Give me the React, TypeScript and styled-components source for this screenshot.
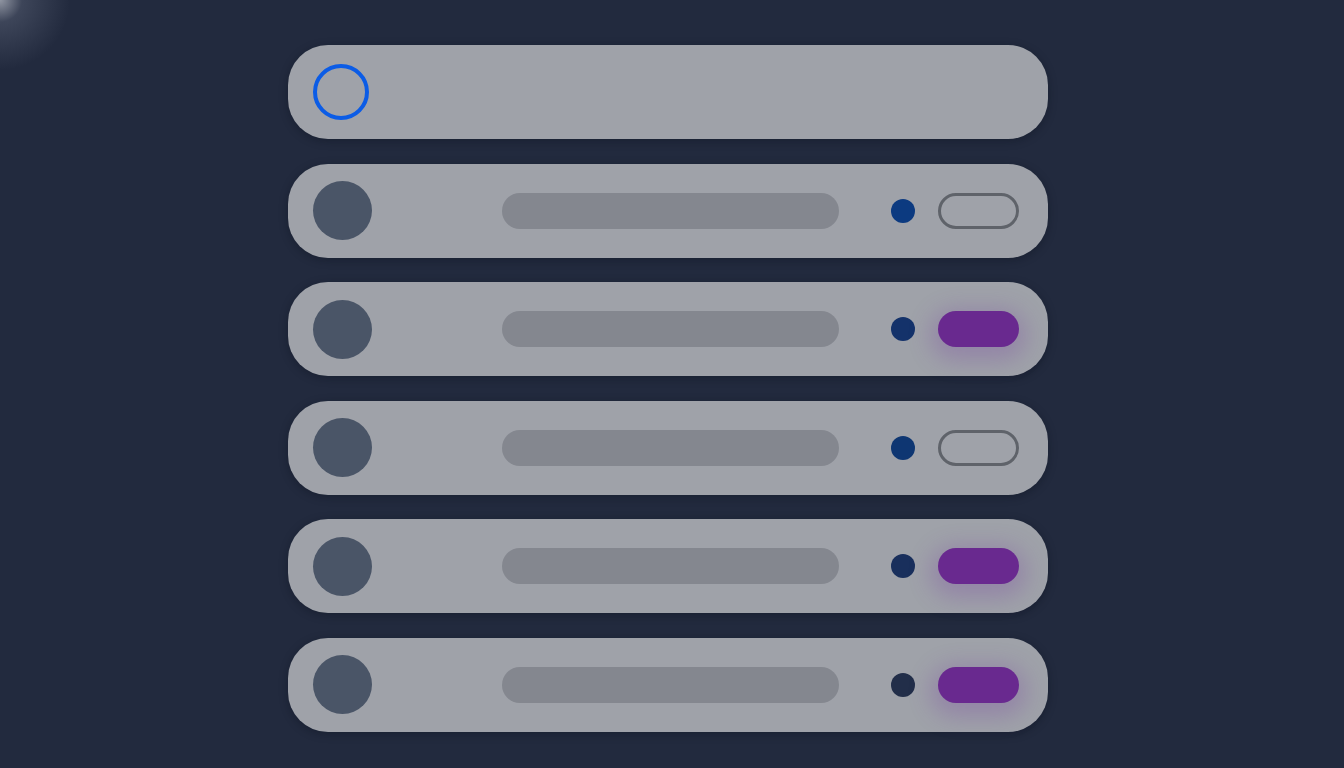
import React from "react";
import styled, { createGlobalStyle } from "styled-components";

const GlobalStyle = createGlobalStyle`
  html, body {
    margin: 0;
    padding: 0;
    background: #222a3e;
    font-family: "Inter", "Liberation Sans", sans-serif;
  }
`;

const Page = styled.div`
  width: 1344px;
  height: 768px;
  overflow: hidden;
  background: radial-gradient(
      circle at 0 0,
      rgba(235, 238, 245, 0.55) 0px,
      rgba(170, 178, 198, 0.2) 22px,
      rgba(34, 42, 62, 0) 70px
    ),
    #222a3e;
  display: flex;
  flex-direction: column;
  align-items: flex-start;
  padding: 45px 0 0 288px;
  box-sizing: border-box;
`;

const List = styled.div`
  display: flex;
  flex-direction: column;
  gap: 24.6px;
  width: 760px;
`;

const Card = styled.div`
  display: flex;
  align-items: center;
  height: 94px;
  padding: 0 29px 0 25px;
  box-sizing: border-box;
  border-radius: 40px;
  background: #9fa2a9;
  box-shadow: 0 2px 8px rgba(10, 14, 26, 0.35);
`;

const SearchRing = styled.div`
  width: 56px;
  height: 56px;
  box-sizing: border-box;
  border-radius: 50%;
  border: 4px solid #0b5ce6;
`;

const Avatar = styled.div`
  width: 59px;
  height: 59px;
  border-radius: 50%;
  background: #4a5567;
  flex-shrink: 0;
`;

const Bar = styled.div`
  width: 337px;
  height: 36px;
  margin-left: auto;
  border-radius: 18px;
  background: #84878f;
`;

const Dot = styled.div<{ $color: string }>`
  width: 24px;
  height: 24px;
  margin-left: 52px;
  border-radius: 50%;
  background: ${(p) => p.$color};
`;

const Toggle = styled.div<{ $on: boolean }>`
  width: 81px;
  height: 36px;
  margin-left: 23px;
  box-sizing: border-box;
  border-radius: 18px;
  border: ${(p) => (p.$on ? "none" : "3px solid #5f636a")};
  background: ${(p) => (p.$on ? "#69298f" : "transparent")};
  box-shadow: ${(p) =>
    p.$on ? "0 6px 22px 8px rgba(118, 60, 160, 0.28)" : "none"};
`;

const rows = [
  { dot: "#0c3a80", on: false },
  { dot: "#14326a", on: true },
  { dot: "#0e3672", on: false },
  { dot: "#192f5c", on: true },
  { dot: "#222e49", on: true },
];

const App: React.FC = () => {
  return (
    <>
      <GlobalStyle />
      <Page>
        <List>
          <Card>
            <SearchRing />
          </Card>
          {rows.map((row, i) => (
            <Card key={i}>
              <Avatar />
              <Bar />
              <Dot $color={row.dot} />
              <Toggle $on={row.on} />
            </Card>
          ))}
        </List>
      </Page>
    </>
  );
};

export default App;
